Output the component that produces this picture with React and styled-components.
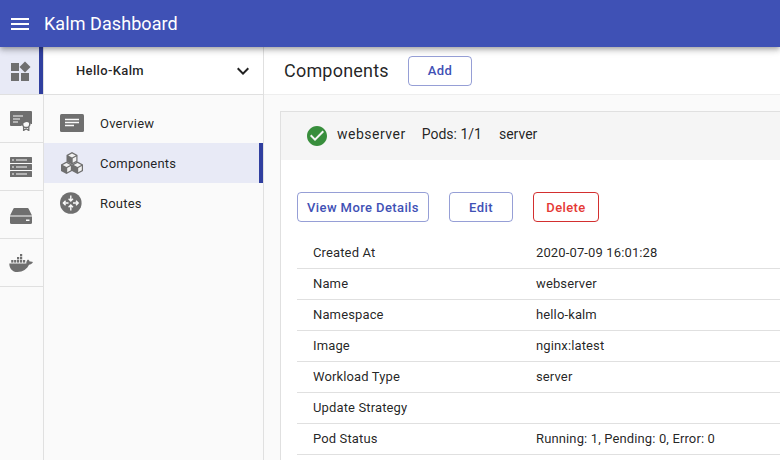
import React from 'react';
import styled, { createGlobalStyle } from 'styled-components';
import { MdCheckCircle, MdExpandMore, MdMenu } from 'react-icons/md';

const GlobalStyle = createGlobalStyle`
  html, body {
    margin: 0;
    padding: 0;
    width: 780px;
    height: 460px;
    overflow: hidden;
    font-family: Roboto, "Liberation Sans", sans-serif;
    color: rgba(0, 0, 0, 0.87);
    background: #fafafa;
  }
`;

const Page = styled.div`
  width: 780px;
  height: 460px;
  display: flex;
  flex-direction: column;
  overflow: hidden;
`;

const AppBar = styled.header`
  position: relative;
  z-index: 2;
  flex: 0 0 47px;
  display: flex;
  align-items: center;
  padding-left: 8px;
  gap: 12px;
  background: #3f51b5;
  color: #fff;
  box-shadow: 0 2px 4px -1px rgba(0, 0, 0, 0.2), 0 4px 5px 0 rgba(0, 0, 0, 0.14), 0 1px 10px 0 rgba(0, 0, 0, 0.12);

  & > svg {
    display: block;
  }
`;

const AppTitle = styled.h1`
  margin: 0;
  font-size: 18px;
  font-weight: 400;
  letter-spacing: 0.07px;
`;

const Body = styled.div`
  flex: 1;
  display: flex;
  min-height: 0;
`;

const Rail = styled.nav`
  flex: 0 0 43px;
  border-right: 1px solid #e0e0e0;
  background: #fafafa;
`;

const RailItem = styled.div`
  box-sizing: border-box;
  height: 48px;
  display: flex;
  align-items: center;
  justify-content: center;
  padding-right: 2px;
  color: #6f6f6f;
  border-bottom: 1px solid #e0e0e0;
  background: ${(p) => (p.$active ? '#e8eaf6' : 'transparent')};
  box-shadow: ${(p) => (p.$active ? 'inset -4px 0 0 #303f9f' : 'none')};
`;

const SideNav = styled.aside`
  flex: 0 0 219px;
  border-right: 1px solid #e0e0e0;
  background: #fafafa;
`;

const AppSwitch = styled.div`
  box-sizing: border-box;
  height: 48px;
  display: flex;
  align-items: center;
  justify-content: space-between;
  padding: 0 8px 0 32px;
  background: #fff;
  border-bottom: 1px solid #e0e0e0;
  font-size: 13px;
  font-weight: 500;
  letter-spacing: 0.35px;
`;

const NavList = styled.div`
  padding-top: 8px;
`;

const NavItem = styled.div`
  box-sizing: border-box;
  height: 40px;
  display: flex;
  align-items: center;
  padding-left: 16px;
  gap: 16px;
  font-size: 13px;
  letter-spacing: 0.2px;
  color: rgba(0, 0, 0, 0.87);
  background: ${(p) => (p.$active ? '#e8eaf6' : 'transparent')};
  box-shadow: ${(p) => (p.$active ? 'inset -4px 0 0 #303f9f' : 'none')};
`;

const NavIcon = styled.span`
  flex: 0 0 24px;
  display: flex;
  justify-content: center;
  color: #6f6f6f;
`;

const Main = styled.main`
  flex: 1;
  min-width: 0;
  display: flex;
  flex-direction: column;
`;

const PageHead = styled.div`
  box-sizing: border-box;
  flex: 0 0 48px;
  display: flex;
  align-items: center;
  gap: 20px;
  padding-left: 20px;
  background: #fff;
  border-bottom: 1px solid #eeeeee;
`;

const PageTitle = styled.h2`
  margin: 0;
  width: 104px;
  font-size: 18px;
  font-weight: 400;
  letter-spacing: 0.2px;
  white-space: nowrap;
`;

const OutlineButton = styled.button`
  box-sizing: border-box;
  height: 30px;
  width: ${(p) => p.$width}px;
  padding: 0;
  border: 1px solid ${(p) => (p.$danger ? '#d32f2f' : 'rgba(63, 81, 181, 0.55)')};
  border-radius: 4px;
  background: transparent;
  color: ${(p) => (p.$danger ? '#e53935' : '#3f51b5')};
  font-family: inherit;
  font-size: 13px;
  font-weight: 500;
  letter-spacing: 0.4px;
`;

const Content = styled.div`
  padding: 16px 0 0 16px;
`;

const Card = styled.section`
  width: 640px;
  border: 1px solid #e0e0e0;
  border-bottom: 0;
  background: #fff;
`;

const CardHead = styled.div`
  height: 48px;
  display: flex;
  align-items: center;
  padding-left: 24px;
  background: #f5f5f5;
  font-size: 14px;
  color: rgba(0, 0, 0, 0.87);
`;

const StatusIcon = styled.span`
  display: flex;
  margin-right: 8px;
  color: #388e3c;
`;

const HeadText = styled.span`
  margin-right: ${(p) => p.$gap}px;
  padding-bottom: 4px;
  letter-spacing: ${(p) => p.$spacing || 0}px;
`;

const CardBody = styled.div`
  padding: 32px 16px 16px;
`;

const Actions = styled.div`
  display: flex;
  gap: 20px;
  margin-bottom: 16px;
`;

const InfoTable = styled.div`
  display: flex;
  flex-direction: column;
`;

const InfoRow = styled.div`
  box-sizing: border-box;
  height: 31px;
  display: grid;
  grid-template-columns: 223px 1fr;
  align-items: center;
  padding: 0 0 2px 16px;
  border-bottom: 1px solid #e0e0e0;
  font-size: 13px;
  letter-spacing: 0.13px;
  color: rgba(0, 0, 0, 0.87);
`;

const DashboardIcon = () => (
  <svg width="20" height="20" viewBox="0 0 20 20" fill="currentColor">
    <rect x="0" y="2" width="8" height="8" />
    <path d="M14 0.5l5.5 5.5-5.5 5.5L8.5 6z" />
    <rect x="0" y="12" width="8" height="8" />
    <rect x="10" y="12" width="8" height="8" />
  </svg>
);

const CertificateIcon = () => (
  <svg width="22" height="24" viewBox="0 -4 22 24">
    <path fill="currentColor" d="M1 0h20a1 1 0 0 1 1 1v12h-1.2a5.5 5.5 0 0 0-9.4 2H1a1 1 0 0 1-1-1V1a1 1 0 0 1 1-1z" />
    <path stroke="#fafafa" strokeWidth="1.2" d="M3 5h10M3 8h7M3 11h5" />
    <circle cx="16.2" cy="13" r="3.6" fill="none" stroke="currentColor" strokeWidth="1.5" />
    <path fill="none" stroke="currentColor" strokeWidth="1.3" d="M13.6 16v3.4l2.6-1.4 2.6 1.4V16" />
  </svg>
);

const StorageIcon = () => (
  <svg width="22" height="20" viewBox="0 0 22 20">
    <rect x="0" y="0" width="22" height="6" rx="0.5" fill="currentColor" />
    <rect x="0" y="7" width="22" height="6" rx="0.5" fill="currentColor" />
    <rect x="0" y="14" width="22" height="6" rx="0.5" fill="currentColor" />
    <path stroke="#fafafa" strokeWidth="1" d="M2 3h2M6 3h11M2 10h2M6 10h11M2 17h2M6 17h11" />
  </svg>
);

const DiskIcon = () => (
  <svg width="22" height="18" viewBox="0 -2 22 18">
    <path fill="currentColor" d="M4.5 0h13a1 1 0 0 1 1 .6L22 7.5H0L3.5.6a1 1 0 0 1 1-.6z" />
    <path fill="currentColor" d="M0 8.5h22V14.5a1.5 1.5 0 0 1-1.5 1.5h-19A1.5 1.5 0 0 1 0 14.5z" />
    <rect x="16" y="11.5" width="3.5" height="1.5" fill="#fafafa" />
  </svg>
);

const DockerIcon = () => (
  <svg width="24" height="18" viewBox="0 0 24 18" fill="currentColor">
    <rect x="11" y="0" width="2.2" height="2.4" />
    <rect x="8" y="3" width="2.2" height="2.4" />
    <rect x="11" y="3" width="2.2" height="2.4" />
    <rect x="2.2" y="6" width="2.2" height="2.6" />
    <rect x="5.1" y="6" width="2.2" height="2.6" />
    <rect x="8" y="6" width="2.2" height="2.6" />
    <rect x="11" y="6" width="2.2" height="2.6" />
    <rect x="14" y="6" width="2.2" height="2.6" />
    <path d="M0.3 9.4H17.3C17.2 8 17.8 6 19 5.4C20 6 20.5 7 20.7 7.6C22 7.2 23 7.5 24 8.1C23 10 21.5 10.7 20 10.8C18 15 14 18 8.5 18C3 18 0.3 14 0.3 9.4Z" />
  </svg>
);

const OverviewIcon = () => (
  <svg width="24" height="18" viewBox="0 0 24 18">
    <rect width="24" height="18" rx="1.5" fill="currentColor" />
    <path stroke="#fafafa" strokeWidth="1.4" d="M5 5.5h14M5 8.5h14M5 11.5h9" />
  </svg>
);

const Cube = ({ x, y }) => (
  <g transform={`translate(${x} ${y})`}>
    <path fill="currentColor" d="M5.5 0L11 3v6.5L5.5 12.5 0 9.5V3z" />
    <path fill="#fff" fillOpacity="0.9" d="M5.5 1.4L9.3 3.4 5.5 5.4 1.7 3.4z" />
    <path fill="#fff" fillOpacity="0.9" d="M6.2 6.6L9.8 4.6v4.2L6.2 10.8z" />
  </g>
);

const CubesIcon = () => (
  <svg width="24" height="22" viewBox="-1 0 24 22">
    <Cube x={5.5} y={0} />
    <Cube x={0} y={9.5} />
    <Cube x={11} y={9.5} />
  </svg>
);

const RoutesIcon = () => (
  <svg width="24" height="22" viewBox="0 0 24 22">
    <circle cx="10.8" cy="11" r="10.8" fill="currentColor" />
    <g fill="none" stroke="#fafafa" strokeWidth="1.4">
      <path d="M10.8 3.5v5.5M8.6 6.8l2.2 2.2 2.2-2.2" />
      <path d="M10.8 18.5V13M8.6 15.2l2.2-2.2 2.2 2.2" />
      <path d="M3 11h5.5M5.6 8.8L3.4 11l2.2 2.2" />
      <path d="M13 11h5.5M16 8.8l2.2 2.2-2.2 2.2" />
    </g>
  </svg>
);

const details = [
  ['Created At', '2020-07-09 16:01:28'],
  ['Name', 'webserver'],
  ['Namespace', 'hello-kalm'],
  ['Image', 'nginx:latest'],
  ['Workload Type', 'server'],
  ['Update Strategy', ''],
  ['Pod Status', 'Running: 1, Pending: 0, Error: 0'],
];

export default function App() {
  return (
    <Page>
      <GlobalStyle />
      <AppBar>
        <MdMenu size={24} />
        <AppTitle>Kalm Dashboard</AppTitle>
      </AppBar>
      <Body>
        <Rail>
          <RailItem $active><DashboardIcon /></RailItem>
          <RailItem><CertificateIcon /></RailItem>
          <RailItem><StorageIcon /></RailItem>
          <RailItem><DiskIcon /></RailItem>
          <RailItem><DockerIcon /></RailItem>
        </Rail>
        <SideNav>
          <AppSwitch>
            Hello-Kalm
            <MdExpandMore size={24} />
          </AppSwitch>
          <NavList>
            <NavItem><NavIcon><OverviewIcon /></NavIcon>Overview</NavItem>
            <NavItem $active><NavIcon><CubesIcon /></NavIcon>Components</NavItem>
            <NavItem><NavIcon><RoutesIcon /></NavIcon>Routes</NavItem>
          </NavList>
        </SideNav>
        <Main>
          <PageHead>
            <PageTitle>Components</PageTitle>
            <OutlineButton $width={64}>Add</OutlineButton>
          </PageHead>
          <Content>
            <Card>
              <CardHead>
                <StatusIcon><MdCheckCircle size={24} /></StatusIcon>
                <HeadText $gap={16} $spacing={0.5}>webserver</HeadText>
                <HeadText $gap={17}>Pods: 1/1</HeadText>
                <HeadText $gap={0}>server</HeadText>
              </CardHead>
              <CardBody>
                <Actions>
                  <OutlineButton $width={132}>View More Details</OutlineButton>
                  <OutlineButton $width={64}>Edit</OutlineButton>
                  <OutlineButton $width={66} $danger>Delete</OutlineButton>
                </Actions>
                <InfoTable>
                  {details.map(([label, value]) => (
                    <InfoRow key={label}>
                      <span>{label}</span>
                      <span>{value}</span>
                    </InfoRow>
                  ))}
                </InfoTable>
              </CardBody>
            </Card>
          </Content>
        </Main>
      </Body>
    </Page>
  );
}
